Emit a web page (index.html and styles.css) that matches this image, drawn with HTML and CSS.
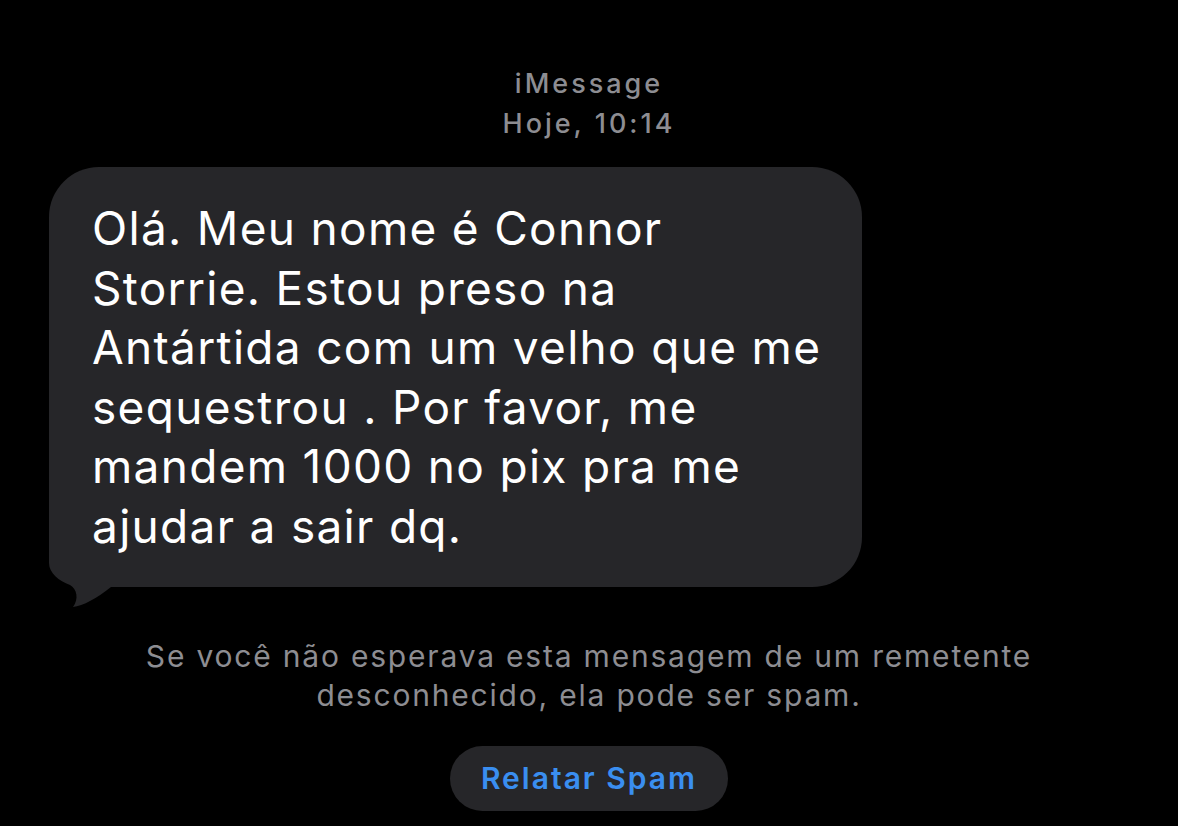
FILE: index.html
```html
<!DOCTYPE html>
<html lang="pt">
  <head>
    <meta charset="UTF-8" />
    <meta name="viewport" content="width=device-width, initial-scale=1.0" />
    <title>iMessage</title>
    <link rel="stylesheet" href="styles.css">
  </head>
  <body>
    <div class="thread">
      <div class="meta">
        <div class="service">iMessage</div>
        <div class="time">Hoje, 10:14</div>
      </div>

      <div class="bubble">
        <svg class="tail" width="62" height="72" viewBox="0 0 62 72">
          <path d="M0 0 L0 26 C0 36 10 44 21 48 C28 52 30 62 24 70 C34 69 48 61 62 50 L62 0 Z" fill="#262629"/>
        </svg>
        <p class="text">Olá. Meu nome é Connor<br>Storrie. Estou preso na<br>Antártida com um velho que me<br>sequestrou . Por favor, me<br>mandem 1000 no pix pra me<br>ajudar a sair dq.</p>
      </div>

      <p class="notice">Se você não esperava esta mensagem de um remetente desconhecido, ela pode ser spam.</p>

      <button class="report">Relatar Spam</button>
    </div>
  </body>
</html>
```

FILE: styles.css
```css
html,
body {
  margin: 0;
  background: #000;
}
body {
  font-family: Inter, "Noto Sans", sans-serif;
  width: 1178px;
  height: 826px;
  overflow: hidden;
}
.thread {
  display: flex;
  flex-direction: column;
  align-items: center;
  padding-top: 64px;
}
.meta {
  text-align: center;
  color: #8d8d92;
  font-size: 27px;
  font-weight: 500;
  line-height: 40px;
  letter-spacing: 3px;
}
.bubble {
  position: relative;
  align-self: flex-start;
  margin: 23px 0 0 49px;
  width: 813px;
  box-sizing: border-box;
  padding: 32px 30px 30px 43px;
  background: #262629;
  border-radius: 50px;
}
.text {
  position: relative;
  margin: 0;
  color: #fff;
  font-size: 46px;
  line-height: 59.6px;
  letter-spacing: 1.3px;
}
.tail {
  position: absolute;
  left: 0;
  bottom: -22px;
  display: block;
}
.notice {
  margin: 50px 0 0;
  width: 980px;
  text-align: center;
  color: #8d8d92;
  font-size: 30px;
  line-height: 39px;
  letter-spacing: 1.8px;
}
.report {
  margin-top: 31px;
  width: 278px;
  height: 65px;
  border: none;
  border-radius: 33px;
  background: #262629;
  color: #3a8ef0;
  font-family: inherit;
  font-size: 30px;
  font-weight: 600;
  letter-spacing: 2px;
}
```
